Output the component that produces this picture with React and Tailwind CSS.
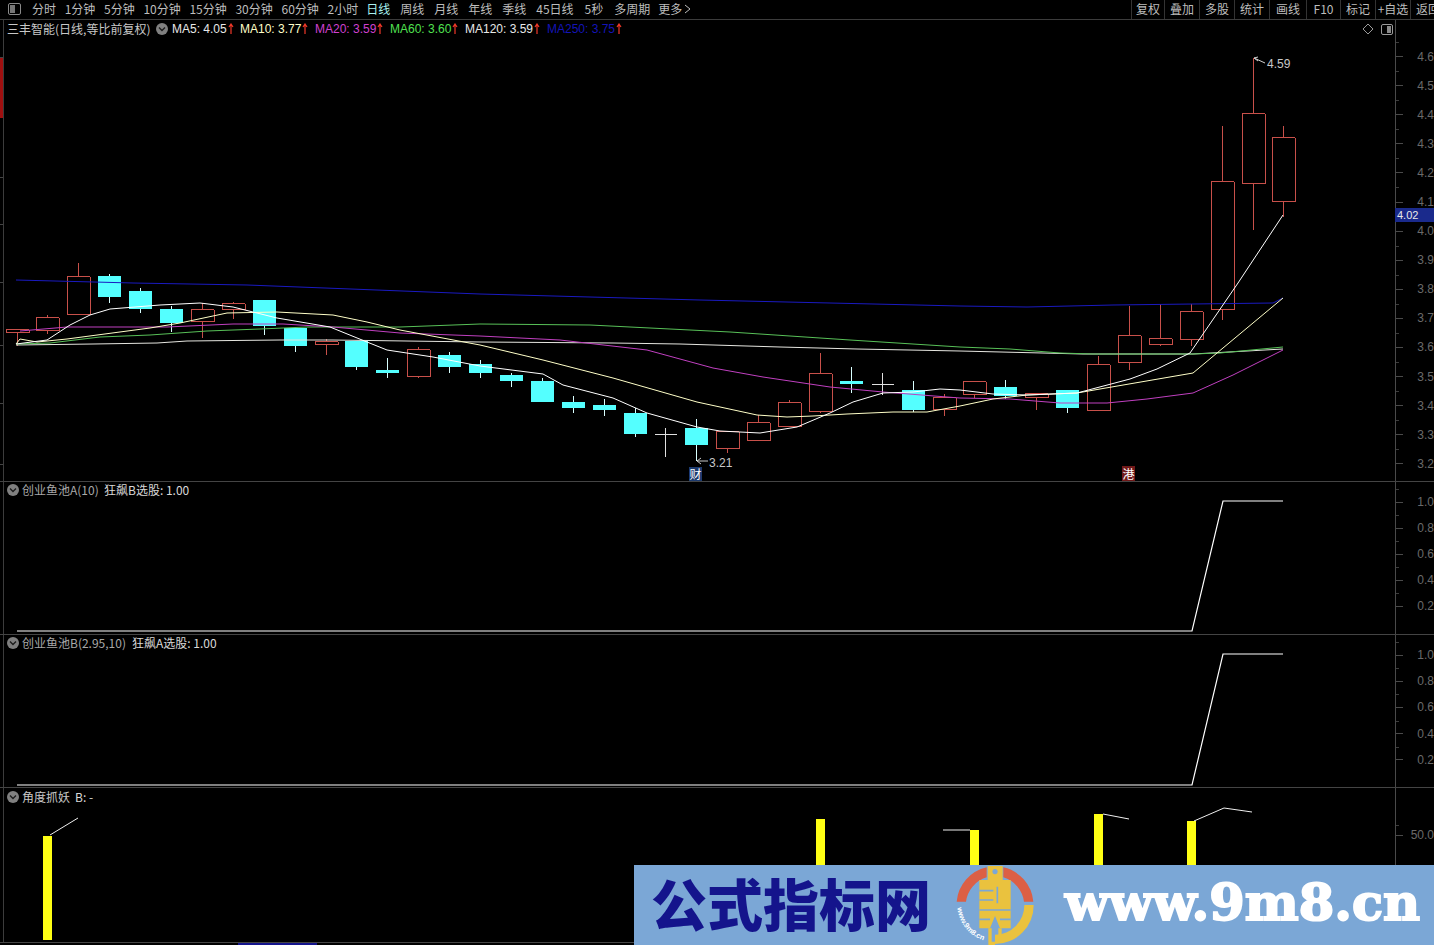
import React from 'react';

const cjk = '"Noto Sans CJK SC", "Liberation Sans", sans-serif';

const periodsA = ['分时', '1分钟', '5分钟', '10分钟', '15分钟', '30分钟', '60分钟', '2小时'];
const periodsB = ['日线', '周线', '月线', '年线', '季线', '45日线', '5秒', '多周期'];
const tools = [
  { label: '复权', w: 'w-[33px]' },
  { label: '叠加', w: 'w-[35px]' },
  { label: '多股', w: 'w-[35px]' },
  { label: '统计', w: 'w-[35px]' },
  { label: '画线', w: 'w-[37px]' },
  { label: 'F10', w: 'w-[34px]' },
  { label: '标记', w: 'w-[35px]' },
  { label: '+自选', w: 'w-[35px]' },
];

const maLabels = [
  { text: 'MA5: 4.05', color: 'text-[#e8e8e8]', w: 'w-[68px]' },
  { text: 'MA10: 3.77', color: 'text-[#ffffc8]', w: 'w-[75px]' },
  { text: 'MA20: 3.59', color: 'text-[#d040d0]', w: 'w-[75px]' },
  { text: 'MA60: 3.60', color: 'text-[#50e050]', w: 'w-[75px]' },
  { text: 'MA120: 3.59', color: 'text-[#e8e8e8]', w: 'w-[82px]' },
  { text: 'MA250: 3.75', color: 'text-[#1414b8]', w: 'w-[78px]' },
];

// wick top, body top, body bottom, wick bottom, r = red hollow, c = cyan filled, d = doji
const candles = [
  [329, 329, 332, 346, 'r'], [315, 317, 330, 334, 'r'], [263, 276, 314, 314, 'r'], [274, 276, 297, 303, 'c'],
  [288, 291, 309, 313, 'c'], [306, 309, 323, 332, 'c'], [303, 309, 321, 338, 'r'], [302, 303, 309, 319, 'r'],
  [300, 300, 326, 335, 'c'], [328, 328, 346, 352, 'c'], [339, 341, 344, 355, 'r'], [341, 341, 367, 370, 'c'],
  [358, 370, 373, 378, 'c'], [347, 349, 376, 378, 'r'], [352, 355, 367, 373, 'c'], [360, 364, 373, 378, 'c'],
  [373, 375, 381, 387, 'c'], [378, 381, 402, 402, 'c'], [396, 402, 408, 413, 'c'], [399, 405, 410, 416, 'c'],
  [408, 413, 434, 437, 'c'], [428, 434, 434, 457, 'd'], [419, 428, 445, 461, 'c'], [431, 431, 448, 453, 'r'],
  [415, 422, 440, 440, 'r'], [400, 402, 426, 426, 'r'], [353, 373, 411, 413, 'r'], [367, 381, 384, 393, 'c'],
  [373, 384, 384, 395, 'd'], [381, 390, 410, 412, 'c'], [394, 397, 409, 416, 'r'], [381, 381, 394, 398, 'r'],
  [380, 387, 396, 399, 'c'], [393, 393, 397, 410, 'r'], [390, 390, 408, 413, 'c'], [356, 364, 410, 410, 'r'],
  [306, 335, 362, 370, 'r'], [304, 338, 344, 346, 'r'], [304, 311, 339, 346, 'r'], [126, 181, 309, 320, 'r'],
  [58, 113, 183, 230, 'r'], [126, 137, 201, 217, 'r'],
];

const ma5 = '16,344 47,340 70,325 90,315 110,309 160,305 200,303 233,307 277,318 330,327 367,342 387,350 433,357 480,366 543,374 563,385 613,398 647,413 697,427 720,431 760,433 797,427 830,413 853,402 883,393 913,392 940,389 960,390 993,394 1027,395 1077,393 1130,379 1157,369 1190,353 1238,283 1283,215';
const ma10 = '16,344 20,339 37,342 67,339 150,328 180,323 227,313 277,312 333,315 367,322 400,330 480,345 543,360 613,378 697,402 757,415 787,417 813,416 847,414 893,412 927,412 960,406 993,399 1027,395 1077,393 1100,389 1193,373 1217,353 1283,298';
const ma20 = '20,331 67,327 167,327 233,324 283,324 333,327 400,333 480,336 560,340 647,350 713,368 763,377 830,387 883,392 960,398 1010,399 1060,403 1107,403 1147,399 1193,393 1233,375 1283,350';
const ma60 = '16,344 50,343 100,337 150,335 207,331 260,329 307,327 400,327 480,324 590,325 730,332 850,340 960,347 1010,349 1060,353 1093,354 1193,354 1220,353 1283,347';
const ma120 = '16,345 93,344 157,343 187,341 280,340 333,340 480,342 613,343 680,344 780,347 857,349 960,351 1083,354 1193,354 1283,349';
const ma250 = '16,280 133,283 247,285 480,294 700,300 960,306 1027,307 1113,305 1273,303 1283,298';

function SmallIcon() {
  return (
    <span className="w-[12px] h-[12px] rounded-full bg-[#808080] flex items-center justify-center shrink-0">
      <svg width="8" height="6" viewBox="0 0 8 6" fill="none">
        <path d="M1 1.5 L4 4.5 L7 1.5" stroke="#1c1c1c" strokeWidth="1.4" />
      </svg>
    </span>
  );
}

function UpArrow() {
  return (
    <svg width="6" height="12" viewBox="0 0 6 12" fill="none" className="shrink-0">
      <path d="M3 1 V11 M1 4 L3 1 L5 4" stroke="#f03828" strokeWidth="1.2" />
    </svg>
  );
}

function Toolbar() {
  return (
    <div className="h-[20px] shrink-0 flex items-center pb-[2px] border-b border-[#3c3c3c] text-[12px] leading-none text-[#bdbdbd] overflow-hidden" style={{ fontFamily: cjk }}>
      <div className="w-[32px] shrink-0 pl-[8px]">
        <div className="w-[13px] h-[12px] border border-[#8a8a8a] rounded-[2px] flex p-[1px]">
          <div className="w-[5px] bg-[#777]" />
        </div>
      </div>
      <div className="flex gap-[8.7px]">
        {periodsA.map((p) => <span key={p}>{p}</span>)}
      </div>
      <div className="flex gap-[10px] ml-2">
        {periodsB.map((p, i) => (
          <span key={p} className={i === 0 ? 'text-[#a8f0f0]' : i >= 6 ? 'ml-[1px]' : ''}>{p}</span>
        ))}
      </div>
      <span className="ml-2">更多</span>
      <svg width="7" height="10" viewBox="0 0 7 10" fill="none" className="ml-[2px]">
        <path d="M1 1 L6 5 L1 9" stroke="#bdbdbd" />
      </svg>
      <div className="ml-auto flex h-[20px] shrink-0">
        {tools.map((t) => (
          <span key={t.label} className={`${t.w} border-l border-[#333] flex items-center justify-center`}>{t.label}</span>
        ))}
        <span className="w-[24px] shrink-0 border-l border-[#333] pl-[5px] flex items-center whitespace-nowrap overflow-hidden">返回</span>
      </div>
    </div>
  );
}

function Rail({ ticks, children }) {
  return (
    <div className="w-[4px] shrink-0 border-r border-[#3c3c3c] flex flex-col">
      {children}
      {ticks.map((h, i) => (
        <div key={i} className="border-b border-[#444] w-[3px]" style={{ height: h }} />
      ))}
    </div>
  );
}

function Axis({ labels, rowClass, padClass }) {
  return (
    <div className={`w-[39px] shrink-0 border-l border-[#4a4a4a] flex flex-col text-[12px] leading-none text-[#6a6a6a] overflow-hidden ${padClass}`} style={{ fontFamily: '"Liberation Sans", sans-serif' }}>
      {labels.map((l) => (
        <div key={l} className={`relative flex items-center shrink-0 ${rowClass}`}>
          <span className="absolute top-0 left-0 w-[3px] h-px bg-[#3c3c3c]" />
          <span className="w-[7px] h-px bg-[#4a4a4a]" />
          <span className="ml-auto whitespace-nowrap">{l}</span>
        </div>
      ))}
    </div>
  );
}

function Legend({ height = 'h-[17px]', children }) {
  return (
    <div className={`absolute top-0 left-[3px] ${height} flex items-center text-[12px] leading-none whitespace-nowrap`} style={{ fontFamily: cjk }}>
      {children}
    </div>
  );
}

function PriceChart() {
  return (
    <svg className="block w-full h-full" viewBox="4 20 1391 461" fill="none" strokeLinejoin="round">
      {candles.map((c, i) => {
        const x = Math.round(16.5 + 30.9 * i) + 0.5;
        const [wt, bt, bb, wb, kind] = c;
        if (kind === 'd') {
          return (
            <g key={i} stroke="#e0e0e0" shapeRendering="crispEdges">
              <path d={`M${x} ${wt} V${wb} M${x - 11} ${bt + 0.5} H${x + 11}`} />
            </g>
          );
        }
        if (kind === 'c') {
          return (
            <g key={i} shapeRendering="crispEdges">
              <path d={`M${x} ${wt} V${wb}`} stroke="#d8ffff" />
              <rect x={x - 11.5} y={bt} width="23" height={bb - bt} fill="#54ffff" />
            </g>
          );
        }
        return (
          <g key={i} stroke="#c8504a" shapeRendering="crispEdges">
            <path d={`M${x} ${wt} V${bt} M${x} ${bb} V${wb}`} />
            <rect x={x - 11.5} y={bt + 0.5} width="23" height={bb - bt} />
          </g>
        );
      })}
      <polyline points={ma250} stroke="#1a1ac0" />
      <polyline points={ma120} stroke="#e6e6e0" />
      <polyline points={ma60} stroke="#58c058" />
      <polyline points={ma20} stroke="#c040c0" />
      <polyline points={ma10} stroke="#ffffc8" />
      <polyline points={ma5} stroke="#ffffff" />

      <path d="M1254 58 L1258 57 M1254 58 L1265 63 M1254 58 L1258 61" stroke="#d0d0d0" />
      <text x="1267" y="68" className="text-[12px] fill-[#c8c8c8]" style={{ fontFamily: '"Liberation Sans", sans-serif' }}>4.59</text>
      <path d="M697 461 H708 M697 461 L701 458 M697 461 L701 464" stroke="#c8c8c8" />
      <text x="709" y="467" className="text-[12px] fill-[#c8c8c8]" style={{ fontFamily: '"Liberation Sans", sans-serif' }}>3.21</text>

      <rect x="689" y="467" width="13" height="14" fill="#1c3a6e" />
      <text x="695.5" y="479" textAnchor="middle" className="text-[12px] fill-white" style={{ fontFamily: cjk }}>财</text>
      <rect x="1122" y="466" width="13" height="15" fill="#701818" />
      <text x="1128.5" y="479" textAnchor="middle" className="text-[12px] fill-white" style={{ fontFamily: cjk }}>港</text>
    </svg>
  );
}

function StepChart({ viewBox, points }) {
  return (
    <svg className="block w-full h-full" viewBox={viewBox} fill="none">
      <polyline points={points} stroke="#ffffff" strokeWidth="1.2" />
    </svg>
  );
}

function AngleChart() {
  const bars = [
    [43, 836],
    [816, 819],
    [970, 830],
    [1094, 814],
    [1187, 821],
  ];
  return (
    <svg className="block w-full h-full" viewBox="4 788 1391 154" fill="none">
      {bars.map(([x, y]) => (
        <rect key={x} x={x} y={y} width="9" height={940 - y} fill="#ffff14" />
      ))}
      <g stroke="#f0f0f0">
        <polyline points="50,835 78,818" />
        <polyline points="943,830 970,830" />
        <polyline points="1103,814 1129,819" />
        <polyline points="1194,821 1224,808 1252,812" />
      </g>
    </svg>
  );
}

function Logo() {
  return (
    <svg width="110" height="85" viewBox="0 0 330 255" className="shrink-0 self-start -mt-[5px]" fill="none">
      <defs>
        <path id="logoArc" d="M 52 143 A 115 115 0 0 0 145 245" />
      </defs>
      <path d="M 50 125 A 116 116 0 0 1 140 22 L 140 52 A 88 88 0 0 0 78 125 Z" fill="#dc5f45" />
      <path d="M 190 22 A 116 116 0 0 1 280 125 L 252 125 A 88 88 0 0 0 190 52 Z" fill="#dc5f45" />
      <path d="M 281 135 A 116 116 0 0 1 165 252 L 165 224 A 88 88 0 0 0 253 135 Z" fill="#eac23e" />
      <path fillRule="evenodd" d="M143 18 H188 V60 H212 V205 H180 L165 168 L150 205 H118 V60 H143 Z M165 27 a8 8 0 1 0 0.1 0 Z" fill="#eac23e" />
      <path d="M118 92 H160 M118 120 H160 M172 80 V130 M118 150 H212 M118 178 H150 M180 178 H212" stroke="#7ba7d6" strokeWidth="5" />
      <path d="M150 205 L150 250 H165 M180 205 L180 228" stroke="#eac23e" strokeWidth="10" />
      <text className="text-[22px] font-bold fill-white" style={{ fontFamily: '"Liberation Sans", sans-serif' }}>
        <textPath href="#logoArc">www.9m8.cn</textPath>
      </text>
    </svg>
  );
}

export default function App() {
  return (
    <div className="relative w-[1434px] h-[945px] bg-black overflow-hidden flex flex-col">
      <Toolbar />

      <div className="h-[462px] shrink-0 flex border-b border-[#444]">
        <Rail ticks={[60, 47, 58, 63, 58, 61]}>
          <div className="h-[38px] shrink-0 border-b border-[#444] w-[3px]" />
          <div className="h-[60px] shrink-0 w-[3px] bg-[#a01010]" />
        </Rail>
        <div className="relative flex-1 min-w-0">
          <PriceChart />
          <Legend>
            <span className="text-[#c8c8c8] w-[149px]">三丰智能(日线,等比前复权)</span>
            <SmallIcon />
            <div className="flex ml-[4px]" style={{ fontFamily: '"Liberation Sans", sans-serif' }}>
              {maLabels.map((m) => (
                <span key={m.text} className={`${m.w} ${m.color} flex items-center gap-[1px]`}>
                  {m.text}
                  <UpArrow />
                </span>
              ))}
            </div>
          </Legend>
          <div className="absolute top-[3px] right-[2px] flex items-center gap-[7px]">
            <svg width="12" height="12" viewBox="0 0 12 12" fill="none">
              <path d="M6 1 L11 6 L6 11 L1 6 Z" stroke="#9a9a9a" />
            </svg>
            <div className="w-[12px] h-[11px] border border-[#9a9a9a] rounded-[2px] flex justify-end p-[1px]">
              <div className="w-[4px] bg-[#8a8a8a]" />
            </div>
          </div>
        </div>
        <Axis
          labels={['4.6', '4.5', '4.4', '4.3', '4.2', '4.1', '4.0', '3.9', '3.8', '3.7', '3.6', '3.5', '3.4', '3.3', '3.2']}
          rowClass="h-[29.1px]"
          padClass="pt-[22px]"
        />
      </div>

      <div className="h-[153px] shrink-0 flex border-b border-[#444]">
        <Rail ticks={[]} />
        <div className="relative flex-1 min-w-0">
          <StepChart viewBox="4 482 1391 152" points="17,631 1192,631 1223,501 1283,501" />
          <Legend height="h-[15px]">
            <SmallIcon />
            <span className="ml-[3px] w-[82px] text-[#a8a8a8]">创业鱼池A(10)</span>
            <span className="text-[#d8d8d8]">狂飙B选股: 1.00</span>
          </Legend>
        </div>
        <Axis labels={['1.0', '0.8', '0.6', '0.4', '0.2']} rowClass="h-[26px]" padClass="pt-[7px]" />
      </div>

      <div className="h-[153px] shrink-0 flex border-b border-[#444]">
        <Rail ticks={[]} />
        <div className="relative flex-1 min-w-0">
          <StepChart viewBox="4 635 1391 152" points="17,785 1192,785 1223,654 1283,654" />
          <Legend height="h-[15px]">
            <SmallIcon />
            <span className="ml-[3px] w-[110px] text-[#a8a8a8]">创业鱼池B(2.95,10)</span>
            <span className="text-[#d8d8d8]">狂飙A选股: 1.00</span>
          </Legend>
        </div>
        <Axis labels={['1.0', '0.8', '0.6', '0.4', '0.2']} rowClass="h-[26.2px]" padClass="pt-[7px]" />
      </div>

      <div className="h-[155px] shrink-0 flex border-b border-[#444]">
        <Rail ticks={[]} />
        <div className="relative flex-1 min-w-0">
          <AngleChart />
          <Legend>
            <SmallIcon />
            <span className="ml-[3px] w-[53px] text-[#c8c8c8]">角度抓妖</span>
            <span className="text-[#d8d8d8]">B: -</span>
          </Legend>
        </div>
        <Axis labels={['50.0']} rowClass="h-[20px]" padClass="pt-[37px]" />
      </div>

      <div className="flex-1 pl-[238px]">
        <div className="w-[79px] h-full bg-[#14148c]" />
      </div>

      {/* price tag sits over the axis */}
      <div className="absolute left-[1395px] top-[208px] w-[39px] h-[14px] bg-[#1a2a8c] text-[11px] leading-[14px] text-[#e8e8e8] pl-[2px]" style={{ fontFamily: '"Liberation Sans", sans-serif' }}>
        4.02
      </div>

      {/* site watermark pasted over the bottom right corner */}
      <div className="absolute left-[634px] top-[865px] w-[800px] h-[80px] bg-[#7ba7d6] flex items-center pl-[17px]">
        <span className="w-[289px] shrink-0 pb-[6px] text-[56px] leading-none font-black text-[#14148c] whitespace-nowrap" style={{ fontFamily: '"Noto Sans CJK SC", sans-serif' }}>公式指标网</span>
        <Logo />
        <span className="ml-[15px] pb-[6px] text-[51px] leading-none font-bold text-white whitespace-nowrap [-webkit-text-stroke:2px_white]" style={{ fontFamily: '"DejaVu Serif", serif' }}>www.9m8.cn</span>
      </div>
    </div>
  );
}
